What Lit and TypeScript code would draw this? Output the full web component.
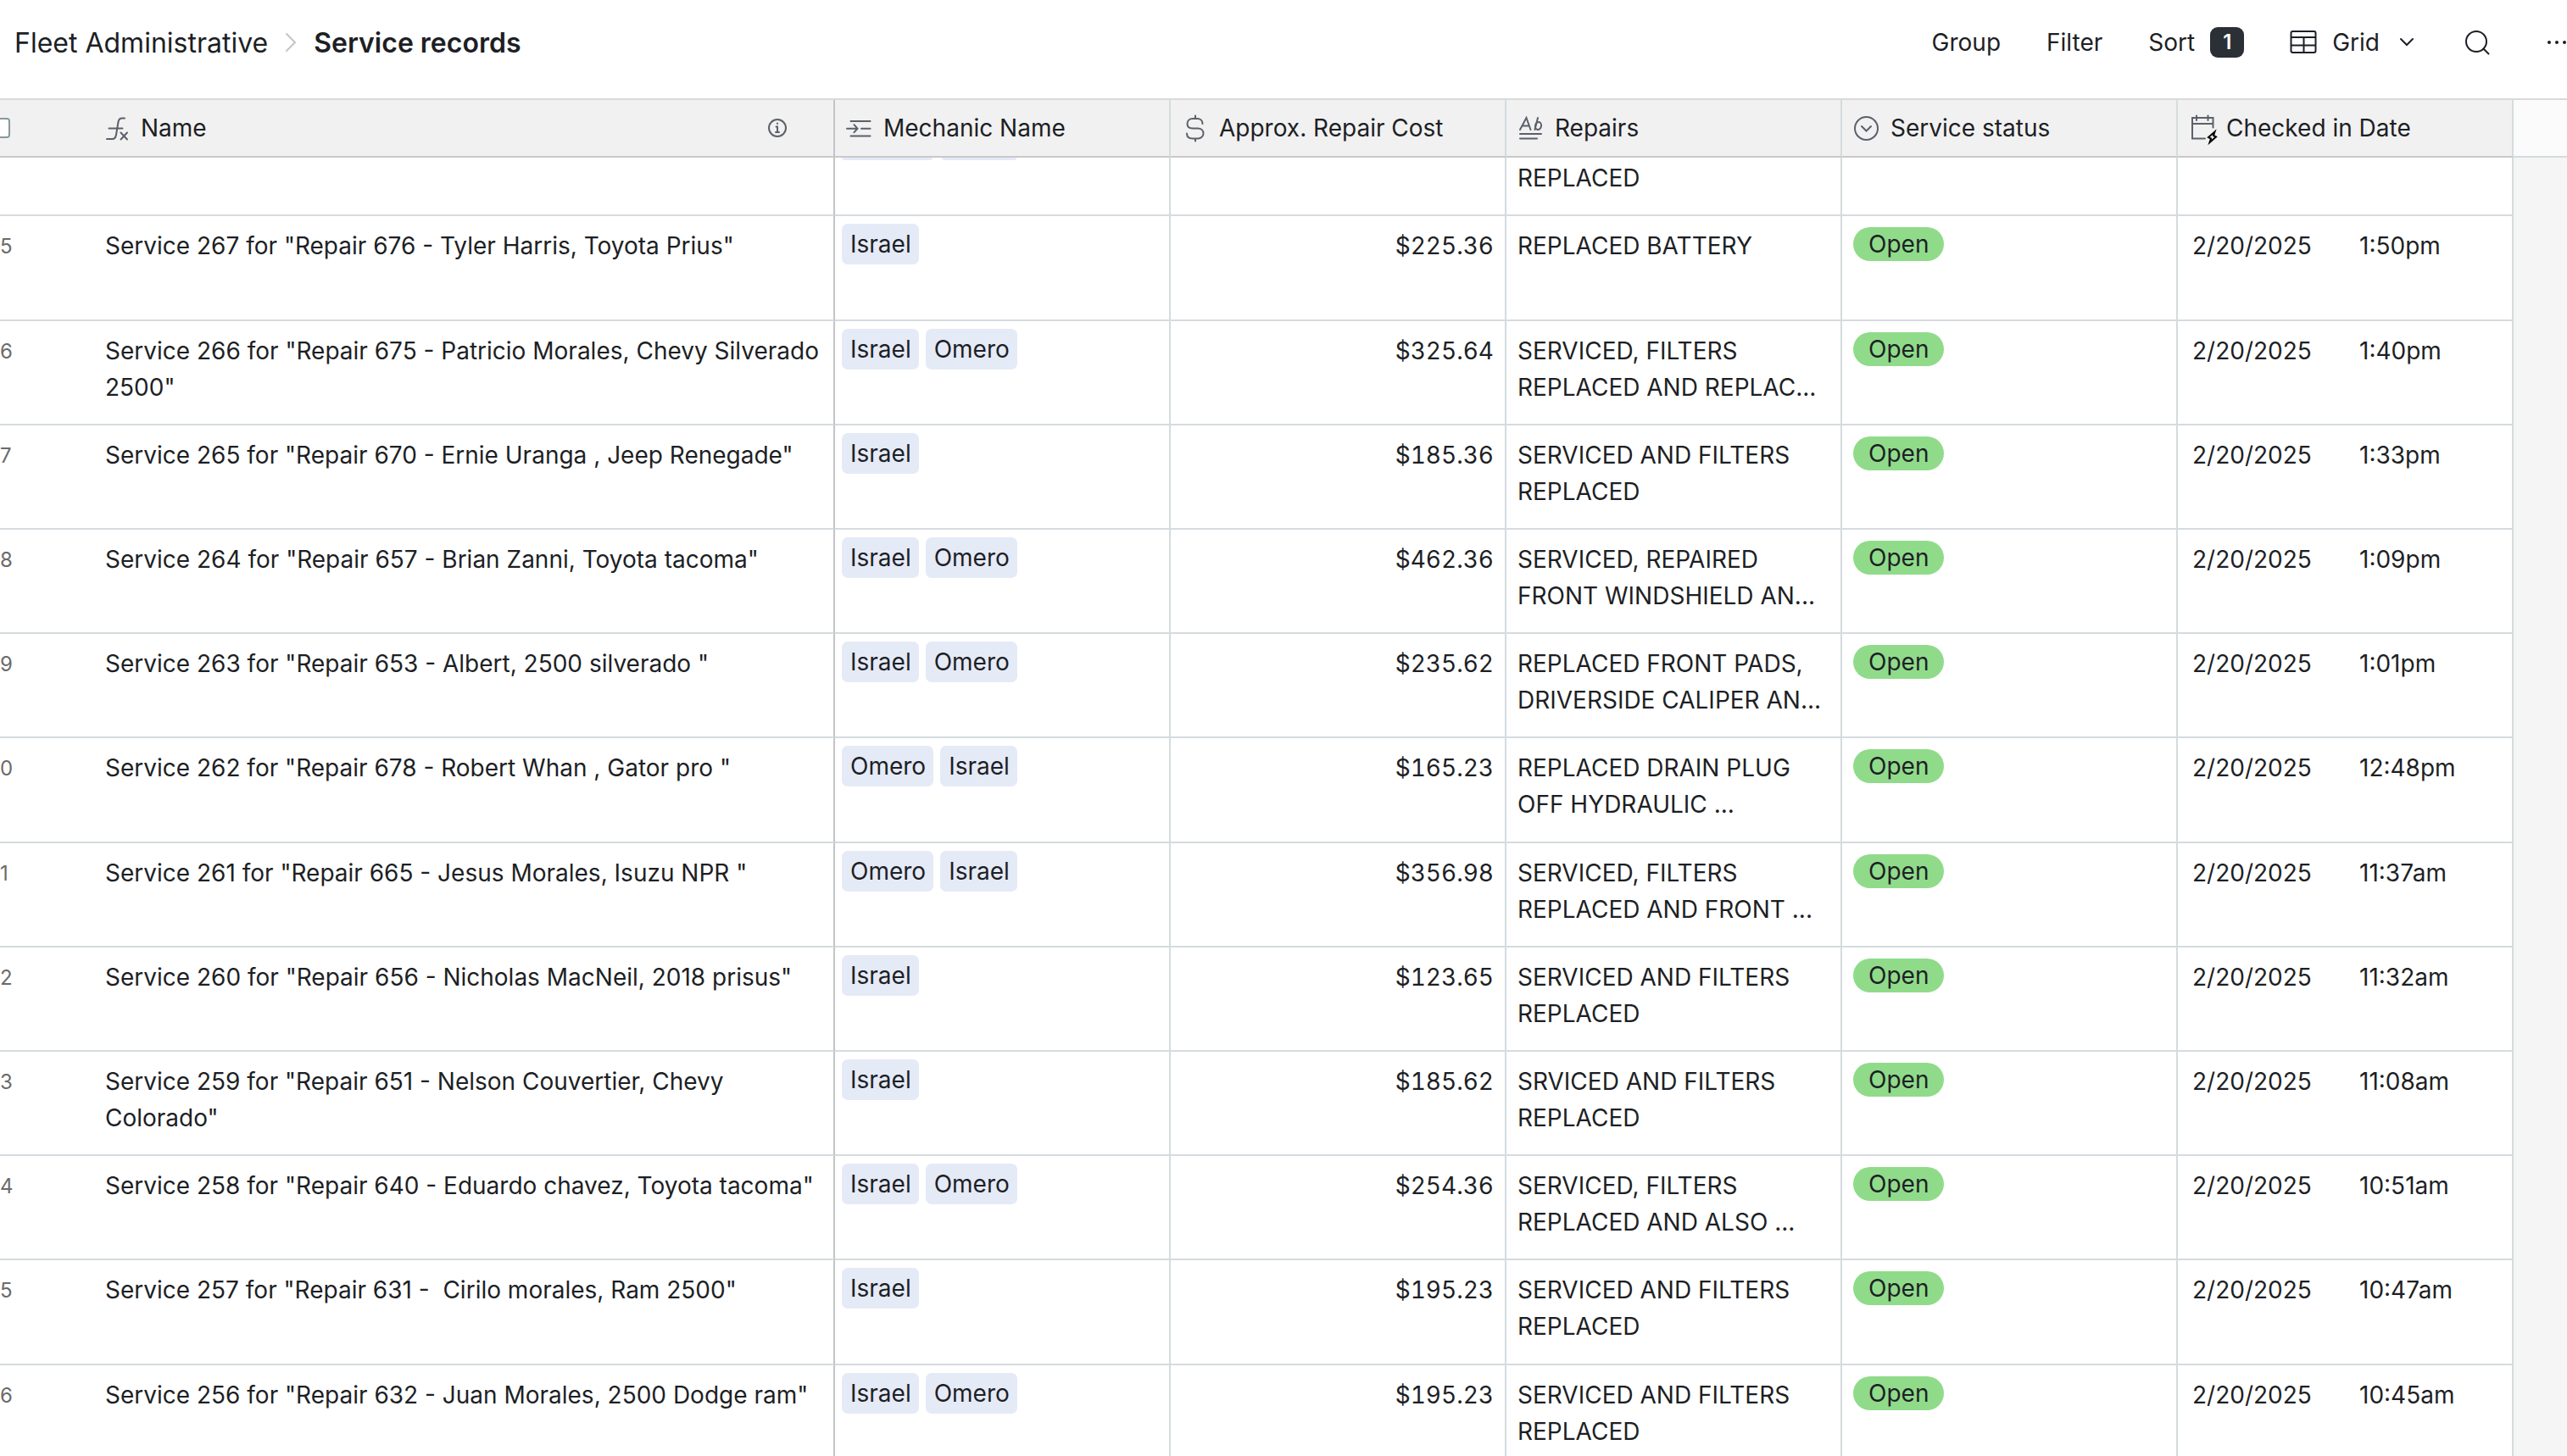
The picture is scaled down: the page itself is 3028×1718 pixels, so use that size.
import { LitElement, html, css, svg } from "lit";
import { customElement } from "lit/decorators.js";

type Row = { n: string; name: string; mech: string[]; cost: string; repairs: string[]; time: string };

const rows: Row[] = [
  { n: "5", name: 'Service 267 for "Repair 676 - Tyler Harris, Toyota Prius"', mech: ["Israel"], cost: "$225.36", repairs: ["REPLACED BATTERY"], time: "1:50pm" },
  { n: "6", name: 'Service 266 for "Repair 675 - Patricio Morales, Chevy Silverado 2500"', mech: ["Israel", "Omero"], cost: "$325.64", repairs: ["SERVICED, FILTERS", "REPLACED AND REPLAC..."], time: "1:40pm" },
  { n: "7", name: 'Service 265 for "Repair 670 - Ernie Uranga , Jeep Renegade"', mech: ["Israel"], cost: "$185.36", repairs: ["SERVICED AND FILTERS", "REPLACED"], time: "1:33pm" },
  { n: "8", name: 'Service 264 for "Repair 657 - Brian Zanni, Toyota tacoma"', mech: ["Israel", "Omero"], cost: "$462.36", repairs: ["SERVICED, REPAIRED", "FRONT WINDSHIELD AN..."], time: "1:09pm" },
  { n: "9", name: 'Service 263 for "Repair 653 - Albert, 2500 silverado "', mech: ["Israel", "Omero"], cost: "$235.62", repairs: ["REPLACED FRONT PADS,", "DRIVERSIDE CALIPER AN..."], time: "1:01pm" },
  { n: "0", name: 'Service 262 for "Repair 678 - Robert Whan , Gator pro "', mech: ["Omero", "Israel"], cost: "$165.23", repairs: ["REPLACED DRAIN PLUG", "OFF HYDRAULIC ..."], time: "12:48pm" },
  { n: "1", name: 'Service 261 for "Repair 665 - Jesus Morales, Isuzu NPR "', mech: ["Omero", "Israel"], cost: "$356.98", repairs: ["SERVICED, FILTERS", "REPLACED AND FRONT ..."], time: "11:37am" },
  { n: "2", name: 'Service 260 for "Repair 656 - Nicholas MacNeil, 2018 prisus"', mech: ["Israel"], cost: "$123.65", repairs: ["SERVICED AND FILTERS", "REPLACED"], time: "11:32am" },
  { n: "3", name: 'Service 259 for "Repair 651 - Nelson Couvertier, Chevy Colorado"', mech: ["Israel"], cost: "$185.62", repairs: ["SRVICED AND FILTERS", "REPLACED"], time: "11:08am" },
  { n: "4", name: 'Service 258 for "Repair 640 - Eduardo chavez, Toyota tacoma"', mech: ["Israel", "Omero"], cost: "$254.36", repairs: ["SERVICED, FILTERS", "REPLACED AND ALSO ..."], time: "10:51am" },
  { n: "5", name: 'Service 257 for "Repair 631 -  Cirilo morales, Ram 2500"', mech: ["Israel"], cost: "$195.23", repairs: ["SERVICED AND FILTERS", "REPLACED"], time: "10:47am" },
  { n: "6", name: 'Service 256 for "Repair 632 - Juan Morales, 2500 Dodge ram"', mech: ["Israel", "Omero"], cost: "$195.23", repairs: ["SERVICED AND FILTERS", "REPLACED"], time: "10:45am" },
];

const icon = (body: unknown) => html`<svg class="ico" viewBox="0 0 32 32" aria-hidden="true">${body}</svg>`;

const formulaIcon = icon(svg`<path d="M26 4.500h-3c-3 0-4 1.500-4.500 4.500l-2.500 15c-.5 3-1.500 5-4.500 5H5M7.500 16.500h16M21.500 21.500l7.500 8M29 21.500l-7.500 8"/>`);
const lookupIcon = icon(svg`<path d="M6.500 8h23M6.500 25.500h23M2 16.700h12.500M10.500 12.200l4 4.500-4 4.500M19 16.700h10.500"/>`);
const dollarIcon = icon(svg`<path d="M17 1.500v3M17 28.500v3M25.500 11c0-4-3-6-6-6h-5.500c-4 0-6.500 2.500-6.500 6s2.500 5.500 6.500 5.500h6c4 0 6.500 2.500 6.500 6s-3 6-6.500 6h-6c-4 0-7-2-7-6"/>`);
const longTextIcon = icon(svg`<path d="M4 18l7.500-14 5 14M7 13.500h7.500M25 4l-3.500 14"/><ellipse cx="25.500" cy="13.500" rx="3.500" ry="4.500" transform="rotate(12 25.500 13.500)"/><path d="M4 23h25M4 28.500h20"/>`);
const selectIcon = icon(svg`<circle cx="16.500" cy="16.500" r="13.500"/><path d="M11 14l5.500 5.500 5.500-5.500"/>`);
const dateIcon = icon(svg`<path d="M20 28.500H5V4h24.500v11.500M5 11h24.500M10 1.500V7M23.500 1.500V7"/><path class="bolt" d="M31.500 20.500l-7.500 6.500 3 1.500-1.500 4.500 7.500-6.500-3-1.500z"/>`);

@customElement("app-root")
export class AppRoot extends LitElement {
  static styles = css`
    :host {
      display: flex;
      flex-direction: column;
      height: 100vh;
      overflow: hidden;
      background: #fff;
      color: #1d1f25;
      font: 28px/43px Inter, "Liberation Sans", sans-serif;
    }
    * { box-sizing: border-box; }
    button {
      display: flex;
      align-items: center;
      padding: 0;
      border: 0;
      background: none;
      color: inherit;
      font: inherit;
    }
    svg { fill: none; stroke: currentColor; stroke-width: 2; stroke-linecap: round; flex: none; overflow: visible; }
    .bar {
      display: flex;
      align-items: center;
      flex: none;
      height: 116px;
      padding: 0 0 16px 17px;
    }
    .crumbs { display: flex; align-items: center; flex: 1; font-size: 32px; gap: 20px; }
    .crumbs a { color: inherit; text-decoration: none; }
    .crumbs h1 { margin: 0; font-size: 32px; font-weight: 600; }
    .sep { width: 14px; height: 28px; color: #c3c5ca; }
    .tools { display: flex; align-items: center; gap: 54px; }
    .badge {
      width: 40px;
      height: 36px;
      margin-left: 18px;
      border-radius: 9px;
      background: #2b2f36;
      color: #fff;
      font-size: 24px;
      font-weight: 600;
      line-height: 36px;
    }
    .grid-ico { width: 32px; height: 32px; margin-right: 18px; }
    .chev { width: 16px; height: 16px; margin-left: 24px; }
    .find { width: 32px; height: 32px; margin-left: 5px; }
    .more { width: 24px; height: 32px; margin-left: 12px; fill: currentColor; stroke: none; }
    .sheet { display: flex; flex-direction: column; flex: 1; min-height: 0; background: #f5f5f5; border-top: 2px solid #d9d9d9; }
    .body { flex: 1; min-height: 0; overflow: hidden; }
    table { width: 100%; border-collapse: separate; border-spacing: 0; table-layout: fixed; }
    .c-name { width: 985px; }
    .c-field { width: 396px; }
    th, td { padding: 0; text-align: left; font-weight: 400; vertical-align: top; }
    th { height: 68px; background: #f1f1f1; border-right: 2px solid #d5dbde; border-bottom: 2px solid #c9c9c9; }
    th.name, td.name { border-right-color: #c3c4c6; }
    th.rest { background: #fbfbfb; border-right: 0; border-bottom-color: #d5dbde; }
    .head { display: flex; align-items: center; height: 66px; padding: 0 12px; gap: 13px; }
    .ico { width: 32px; height: 32px; color: #5c606b; }
    .bolt { stroke: #000; stroke-linejoin: miter; }
    .all { appearance: none; width: 24px; height: 24px; margin: 0 96px 0 -24px; border: 2px solid #8a979e; border-radius: 4px; background: #fff; }
    .info { width: 24px; height: 24px; margin-left: auto; margin-right: 42px; color: #5c606b; }
    td { height: 123px; background: #fff; border-right: 2px solid #d5dbde; border-bottom: 2px solid #d5dbde; }
    tr:nth-child(5n + 2) td { height: 124px; }
    td.rest { background: transparent; border: 0; }
    .line { display: flex; padding: 14px 13px 0; }
    .num { width: 124px; margin-left: -13px; color: #6b6b6b; font-size: 24px; }
    .title { flex: 1; white-space: pre-wrap; }
    .money { justify-content: flex-end; font-variant-numeric: tabular-nums; }
    .long { display: block; white-space: nowrap; }
    .tags { display: flex; gap: 8px; padding: 9px 8px 0; }
    .tag { padding: 0 9px 0 10px; border-radius: 7px; background: #e5eaf7; line-height: 48px; }
    .state { display: inline-block; margin: 13px 0 0 13px; padding: 0 18px; border-radius: 20px; background: #90db8a; line-height: 40px; vertical-align: top; }
    .when { padding-left: 17px; }
    .date { width: 197px; }
    /* Row scrolled partly under the header: only its lower part shows. */
    .cut td { height: 69px; }
    .cut .line { padding-top: 3px; }
    .cut .tags { gap: 11px; padding-top: 0; }
    .edge { width: 107px; height: 3px; border-radius: 0 0 7px 7px; background: #e5eaf7; }
    .edge + .edge { width: 88px; }
  `;

  private head(label: string, glyph: unknown) {
    return html`<th scope="col"><div class="head">${glyph}<span>${label}</span></div></th>`;
  }

  private row(r: Row) {
    return html`<tr>
      <td class="name"><div class="line"><span class="num">${r.n}</span><span class="title">${r.name}</span></div></td>
      <td><div class="tags">${r.mech.map((m) => html`<span class="tag">${m}</span>`)}</div></td>
      <td><div class="line money">${r.cost}</div></td>
      <td><div class="line long">${r.repairs.map((t) => html`<div>${t}</div>`)}</div></td>
      <td><span class="state">Open</span></td>
      <td><div class="line when"><span class="date">2/20/2025</span><span>${r.time}</span></div></td>
      <td class="rest"></td>
    </tr>`;
  }

  private cols() {
    return html`<colgroup>
      <col class="c-name" /><col class="c-field" /><col class="c-field" /><col class="c-field" /><col class="c-field" /><col class="c-field" /><col />
    </colgroup>`;
  }

  render() {
    return html`
      <header class="bar">
        <nav class="crumbs" aria-label="Breadcrumb">
          <a href="#fleet">Fleet Administrative</a>
          <svg class="sep" viewBox="0 0 14 28"><path d="M2 4l10 10L2 24" /></svg>
          <h1>Service records</h1>
        </nav>
        <div class="tools">
          <button>Group</button>
          <button>Filter</button>
          <button>Sort<span class="badge">1</span></button>
          <button>
            <svg class="grid-ico" viewBox="0 0 32 32"><rect x="1.500" y="3" width="29" height="25" rx="2" /><path d="M2 10h28M2 19.500h28M16.500 10v18" /></svg>
            Grid
            <svg class="chev" viewBox="0 0 16 16"><path d="M1 4l7 7 7-7" /></svg>
          </button>
          <button aria-label="Search"><svg class="find" viewBox="0 0 32 32"><circle cx="15" cy="15" r="12" /><path d="M23.500 23.500l6 6" /></svg></button>
          <button aria-label="More"><svg class="more" viewBox="0 0 24 32"><circle cx="3" cy="16" r="2" /><circle cx="12" cy="16" r="2" /><circle cx="21" cy="16" r="2" /></svg></button>
        </div>
      </header>
      <main class="sheet">
        <table>
          ${this.cols()}
          <thead>
            <tr>
              <th class="name" scope="col">
                <div class="head">
                  <input class="all" type="checkbox" aria-label="Select all records" />${formulaIcon}<span>Name</span>
                  <svg class="info" viewBox="0 0 24 24"><circle cx="12" cy="12" r="10" /><path d="M10.500 10.500H12V17M10 17h4M12 6.500v.5" /></svg>
                </div>
              </th>
              ${this.head("Mechanic Name", lookupIcon)} ${this.head("Approx. Repair Cost", dollarIcon)}
              ${this.head("Repairs", longTextIcon)} ${this.head("Service status", selectIcon)}
              ${this.head("Checked in Date", dateIcon)}
              <th class="rest"></th>
            </tr>
          </thead>
        </table>
        <div class="body">
          <table>
            ${this.cols()}
            <tbody>
              <tr class="cut">
                <td class="name"></td>
                <td><div class="tags"><span class="edge"></span><span class="edge"></span></div></td>
                <td></td>
                <td><div class="line">REPLACED</div></td>
                <td></td>
                <td></td>
                <td class="rest"></td>
              </tr>
              ${rows.map((r) => this.row(r))}
            </tbody>
          </table>
        </div>
      </main>
    `;
  }
}
